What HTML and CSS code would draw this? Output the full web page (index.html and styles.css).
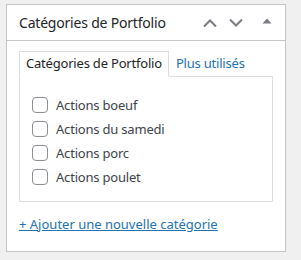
FILE: index.html
```html
<!DOCTYPE html>
<html lang="fr">
<head>
    <meta charset="UTF-8">
    <meta name="viewport" content="width=device-width, initial-scale=1.0">
    <title>Catégories de Portfolio</title>
    <link rel="stylesheet" href="styles.css">
</head>
<body>
    <div class="postbox">
        <div class="postbox-header">
            <h2 class="hndle">Catégories de Portfolio</h2>
            <div class="handle-actions">
                <button class="handle-btn order" type="button">
                    <svg width="16" height="10" viewBox="0 0 16 10">
                        <polyline points="2,8.5 8,2.5 14,8.5" class="chev"></polyline>
                    </svg>
                </button>
                <button class="handle-btn order" type="button">
                    <svg width="16" height="10" viewBox="0 0 16 10">
                        <polyline points="2,1.5 8,7.5 14,1.5" class="chev"></polyline>
                    </svg>
                </button>
                <button class="handle-btn toggle" type="button">
                    <svg width="10" height="6" viewBox="0 0 10 6">
                        <polygon points="0.5,5.5 5,0.5 9.5,5.5" class="tri"></polygon>
                    </svg>
                </button>
            </div>
        </div>
        <div class="inside">
            <ul class="tabs">
                <li class="tab active">Catégories de Portfolio</li>
                <li class="tab"><a href="#">Plus utilisés</a></li>
            </ul>
            <div class="tabs-panel">
                <ul class="checklist">
                    <li><label><input type="checkbox"> Actions boeuf</label></li>
                    <li><label><input type="checkbox"> Actions du samedi</label></li>
                    <li><label><input type="checkbox"> Actions porc</label></li>
                    <li><label><input type="checkbox"> Actions poulet</label></li>
                </ul>
            </div>
            <p class="adder"><a href="#">+ Ajouter une nouvelle catégorie</a></p>
        </div>
    </div>
</body>
</html>
```

FILE: styles.css
```css
* {
    margin: 0;
    padding: 0;
    box-sizing: border-box;
}

body {
    font-family: "Noto Sans", "Open Sans", sans-serif;
    font-size: 13px;
    color: #3c434a;
    background-color: #f0f0f1;
    padding: 4px 0 0 6px;
}

.postbox {
    width: 280px;
    height: 248px;
    background: #fff;
    border: 1px solid #c3c4c7;
}

.postbox-header {
    display: flex;
    align-items: center;
    height: 36px;
    border-bottom: 1px solid #c3c4c7;
}

.hndle {
    flex: 1;
    padding-left: 12px;
    font-size: 14px;
    font-weight: 400;
    color: #1d2327;
    letter-spacing: -0.2px;
}

.handle-actions {
    display: flex;
    height: 100%;
}

.handle-btn {
    border: none;
    background: none;
    display: flex;
    align-items: center;
    justify-content: center;
    height: 100%;
}

.handle-btn.order {
    width: 26px;
}

.handle-btn.toggle {
    width: 36px;
    padding-bottom: 4px;
}

.chev {
    fill: none;
    stroke: #787c82;
    stroke-width: 2;
}

.tri {
    fill: #787c82;
}

.inside {
    padding: 10px 12px 12px;
}

.tabs {
    list-style: none;
    display: flex;
    margin-bottom: -1px;
}

.tab {
    padding: 4px 6px 5px;
    border: 1px solid transparent;
    line-height: 15px;
    letter-spacing: -0.2px;
}

.tab.active {
    border-color: #dcdcde;
    border-bottom-color: #fff;
    background: #fff;
    color: #1d2327;
    position: relative;
}

.tab a {
    color: #2271b1;
    text-decoration: none;
}

.tabs-panel {
    border: 1px solid #dcdcde;
    height: 126px;
    padding: 16px 12px 0;
}

.checklist {
    list-style: none;
}

.checklist li {
    height: 24px;
    display: flex;
    align-items: center;
}

.checklist label {
    display: flex;
    align-items: center;
    gap: 8px;
    letter-spacing: -0.2px;
}

input[type="checkbox"] {
    appearance: none;
    width: 16px;
    height: 16px;
    border: 1px solid #8c8f94;
    border-radius: 4px;
    background: #fff;
}

.adder {
    margin-top: 13px;
    line-height: 18px;
}

.adder a {
    color: #2271b1;
}
```
